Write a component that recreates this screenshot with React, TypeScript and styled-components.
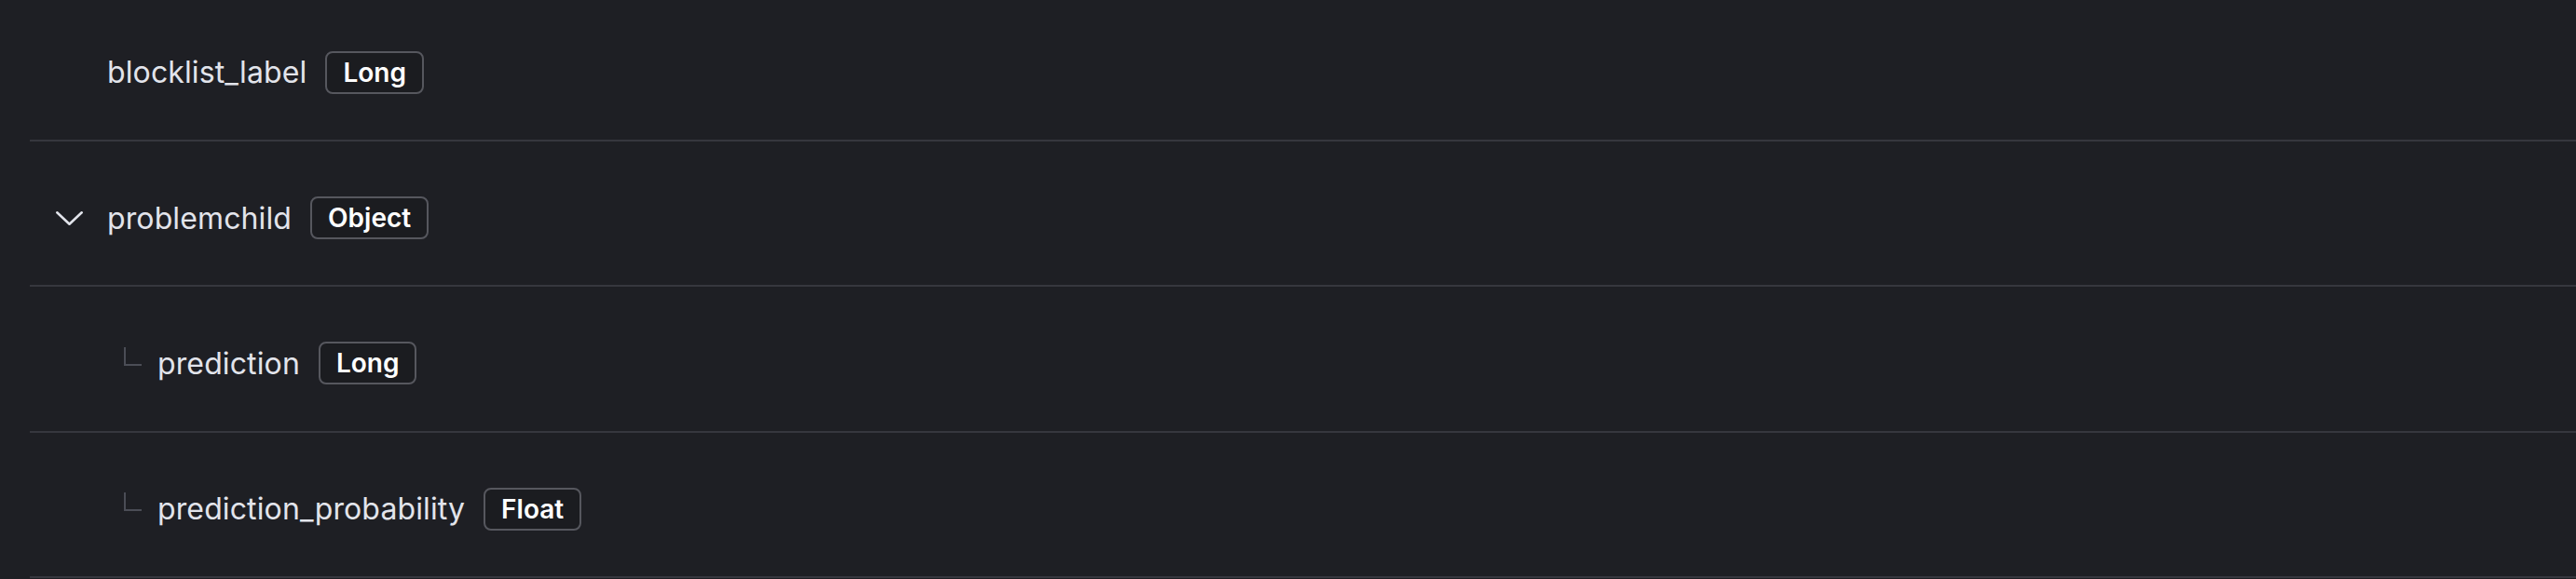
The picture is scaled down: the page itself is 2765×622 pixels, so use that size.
import * as React from 'react';
import styled, { createGlobalStyle } from 'styled-components';

const GlobalStyle = createGlobalStyle`
    html, body {
        margin: 0;
        padding: 0;
        background-color: #1e1f24;
        overflow: hidden;
    }
    body {
        font-family: Inter, 'Noto Sans', sans-serif;
        color: #e2e4eb;
    }
`

type Field = {
    name: string;
    type: string;
    depth: number;
    expandable?: boolean;
}

const fields: Field[] = [
    { name: 'blocklist_label', type: 'Long', depth: 0 },
    { name: 'problemchild', type: 'Object', depth: 0, expandable: true },
    { name: 'prediction', type: 'Long', depth: 1 },
    { name: 'prediction_probability', type: 'Float', depth: 1 },
];

const App = () => {
    return (
        <Page>
            <GlobalStyle />
            <List>
                {fields.map((f) => (
                    <Row key={f.name}>
                        <ToggleSlot>
                            {f.expandable && (
                                <svg width="30" height="16" viewBox="0 0 30 16" fill="none">
                                    <polyline
                                        points="2.25,2.25 15.5,14.75 28.75,2.25"
                                        stroke="#e2e4eb"
                                        strokeWidth="2.5"
                                        strokeLinecap="round"
                                        strokeLinejoin="round"
                                    />
                                </svg>
                            )}
                        </ToggleSlot>
                        {f.depth > 0 && <Branch />}
                        <Name>{f.name}</Name>
                        <TypeBadge>{f.type}</TypeBadge>
                    </Row>
                ))}
            </List>
        </Page>
    )
}

const Page = styled.div`
    width: 100vw;
    height: 100vh;
    overflow: hidden;
    background-color: #1e1f24;
`
const List = styled.div`
    margin-top: -4.33px;
    margin-left: 32px;
    display: flex;
    flex-direction: column;
`
const Row = styled.div`
    box-sizing: border-box;
    height: 156.33px;
    padding: 10px 0 0 16px;
    border-bottom: 2px solid #36373e;
    display: flex;
    flex-direction: row;
    align-items: center;
`
const ToggleSlot = styled.div`
    width: 52px;
    margin-right: 14px;
    display: flex;
    justify-content: center;
    align-items: center;
    svg {
        display: block;
        margin-left: -1px;
    }
`
const Branch = styled.span`
    box-sizing: border-box;
    width: 19px;
    height: 20px;
    margin: 0 16px 15px 19px;
    border-left: 2px solid #4b4d56;
    border-bottom: 2px solid #4b4d56;
`
const Name = styled.span`
    font-size: 32px;
    line-height: normal;
    font-weight: 400;
    letter-spacing: 0.12px;
    color: #e2e4eb;
    margin-left: 1px;
`
const TypeBadge = styled.span`
    box-sizing: border-box;
    height: 46px;
    margin-left: 20px;
    padding: 0 17px;
    border: 2px solid #56575e;
    border-radius: 8px;
    font-size: 28px;
    line-height: 42px;
    font-weight: 600;
    color: #ffffff;
    background-color: #1b1c20;
`

export default App;
